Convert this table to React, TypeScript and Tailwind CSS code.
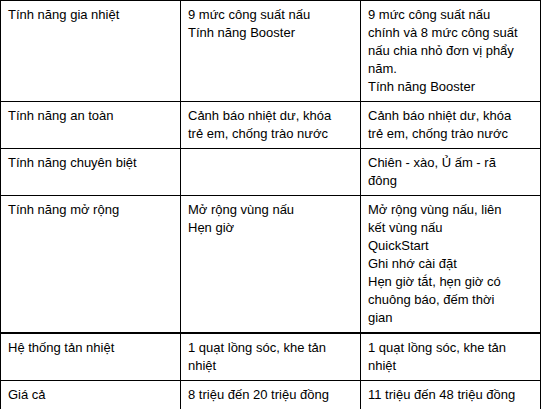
const ROWS: [string, string[], string[]][] = [
  [
    "Tính năng gia nhiệt",
    ["9 mức công suất nấu", "Tính năng Booster"],
    [
      "9 mức công suất nấu chính và 8 mức công suất nấu chia nhỏ đơn vị phẩy năm.",
      "Tính năng Booster",
    ],
  ],
  [
    "Tính năng an toàn",
    ["Cảnh báo nhiệt dư, khóa trẻ em, chống trào nước"],
    ["Cảnh báo nhiệt dư, khóa trẻ em, chống trào nước"],
  ],
  ["Tính năng chuyên biệt", [], ["Chiên - xào, Ủ ấm - rã đông"]],
  [
    "Tính năng mở rộng",
    ["Mở rộng vùng nấu", "Hẹn giờ"],
    [
      "Mở rộng vùng nấu, liên kết vùng nấu",
      "QuickStart",
      "Ghi nhớ cài đặt",
      "Hẹn giờ tắt, hẹn giờ có chuông báo, đếm thời gian",
    ],
  ],
  [
    "Hệ thống tản nhiệt",
    ["1 quạt lồng sóc, khe tản nhiệt"],
    ["1 quạt lồng sóc, khe tản nhiệt"],
  ],
  ["Giá cả", ["8 triệu đến 20 triệu đồng"], ["11 triệu đến 48 triệu đồng"]],
];

const cell = "border border-black align-top pl-[7px] pr-[22px] py-[5px] w-[180px]";

export default function App() {
  return (
    <div className="bg-white w-[541px] h-[409px] font-['Liberation_Sans',Arial,sans-serif] text-[13px] leading-[18px] text-black">
      <table className="border-collapse w-[540px] table-fixed">
        <tbody>
          {ROWS.map(([label, mid, right], i) => {
            // the row above "Hệ thống tản nhiệt" has a heavier rule under it
            const c = i === 3 ? cell + " border-b-2" : cell;
            return (
              <tr key={label}>
                <td className={c}>{label}</td>
                <td className={c}>
                  {mid.map((line) => (
                    <div key={line}>{line}</div>
                  ))}
                </td>
                <td className={c}>
                  {right.map((line) => (
                    <div key={line}>{line}</div>
                  ))}
                </td>
              </tr>
            );
          })}
        </tbody>
      </table>
    </div>
  );
}
